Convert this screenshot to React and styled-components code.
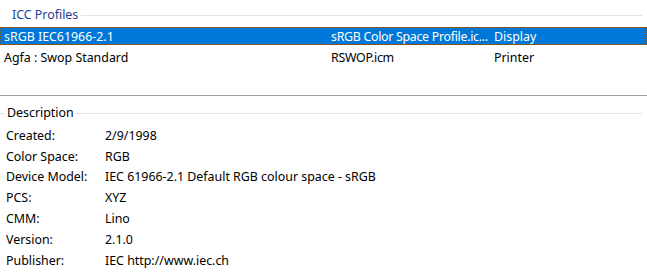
import React from 'react';
import styled, { createGlobalStyle } from 'styled-components';

const GlobalStyle = createGlobalStyle`
  html, body {
    margin: 0;
    padding: 0;
    background: #ffffff;
  }
  body {
    font-family: "Noto Sans", "Open Sans", sans-serif;
    font-size: 12.4px;
    color: #000000;
  }
`;

const Page = styled.div`
  width: 647px;
  height: 273px;
  display: flex;
  flex-direction: column;
  overflow: hidden;
`;

const GroupHeader = styled.div`
  display: flex;
  align-items: center;
  gap: ${p => p.gap || 4}px;
  height: 16px;
  padding: 0 5px 0 ${p => p.indent || 0}px;
  margin-top: ${p => p.top || 0}px;
`;

const HeaderRule = styled.div`
  height: 1px;
  background: #e3e3e3;
  width: ${p => p.width ? `${p.width}px` : 'auto'};
  flex: ${p => p.width ? 'none' : 1};
`;

const HeaderText = styled.span`
  color: ${p => p.color || '#1c3f98'};
  white-space: nowrap;
  line-height: 16px;
`;

const ProfileList = styled.div`
  display: flex;
  flex-direction: column;
  gap: 3px;
  margin-top: 4px;
  height: 60px;
`;

const ProfileRow = styled.div`
  display: grid;
  grid-template-columns: 327px 163px 1fr;
  height: 18px;
  align-items: center;
  padding-left: 4px;
  background: ${p => p.selected ? '#0078d7' : 'transparent'};
  color: ${p => p.selected ? '#ffffff' : '#000000'};
  outline: ${p => p.selected ? '1px dotted #7a4f1a' : 'none'};
  outline-offset: -1px;
`;

const Cell = styled.span`
  white-space: nowrap;
  overflow: hidden;
  letter-spacing: ${p => p.tight ? '-0.3px' : 'normal'};
`;

const Splitter = styled.div`
  height: 1px;
  background: #a0a0a0;
  margin: 8px 0 9px;
`;

const DetailList = styled.div`
  display: flex;
  flex-direction: column;
  margin-top: 4px;
  padding-left: 6px;
`;

const DetailRow = styled.div`
  display: grid;
  grid-template-columns: 99px 1fr;
  height: 20.8px;
  align-items: center;
`;

const profiles = [
  { name: 'sRGB IEC61966-2.1', file: 'sRGB Color Space Profile.ic...', kind: 'Display', selected: true },
  { name: 'Agfa : Swop Standard', file: 'RSWOP.icm', kind: 'Printer' },
];

const details = [
  ['Created:', '2/9/1998'],
  ['Color Space:', 'RGB'],
  ['Device Model:', 'IEC 61966-2.1 Default RGB colour space - sRGB'],
  ['PCS:', 'XYZ'],
  ['CMM:', 'Lino'],
  ['Version:', '2.1.0'],
  ['Publisher:', 'IEC http://www.iec.ch'],
];

export default function App() {
  return (
    <Page>
      <GlobalStyle />
      <GroupHeader indent={12} top={7} gap={3}>
        <HeaderText>ICC Profiles</HeaderText>
        <HeaderRule />
      </GroupHeader>
      <ProfileList>
        {profiles.map(p => (
          <ProfileRow key={p.name} selected={p.selected}>
            <Cell>{p.name}</Cell>
            <Cell tight>{p.file}</Cell>
            <Cell>{p.kind}</Cell>
          </ProfileRow>
        ))}
      </ProfileList>
      <Splitter />
      <GroupHeader gap={2}>
        <HeaderRule width={5} />
        <HeaderText color="#000000">Description</HeaderText>
        <HeaderRule />
      </GroupHeader>
      <DetailList>
        {details.map(([label, value]) => (
          <DetailRow key={label}>
            <Cell>{label}</Cell>
            <Cell>{value}</Cell>
          </DetailRow>
        ))}
      </DetailList>
    </Page>
  );
}
